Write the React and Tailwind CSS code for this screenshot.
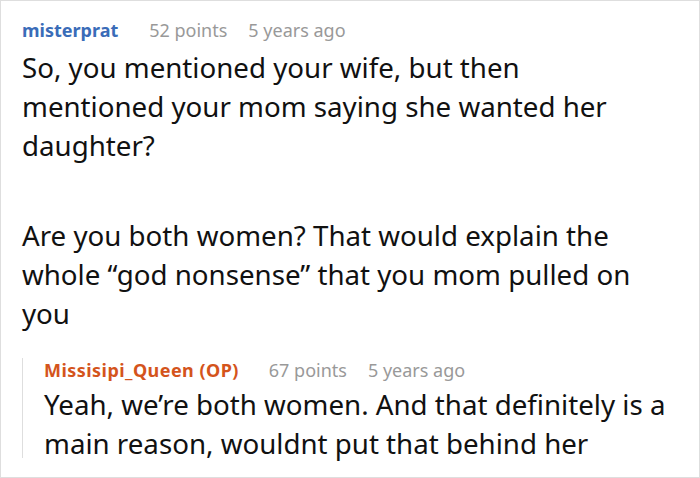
import React from 'react'

const font = { fontFamily: '"Noto Sans", "Open Sans", sans-serif' }

const Meta = ({ name, color, points, age, gapName, className = '' }) => (
    <div className={`flex items-baseline text-[18px] leading-[24px] ${className}`}>
        <span className={`font-bold ${color}`}>{name}</span>
        <span className={`text-[#999] ${gapName}`}>{points}</span>
        <span className="text-[#999] ml-[21px]">{age}</span>
    </div>
)

const App = () => {
    return (
        <div
            className="w-[700px] h-[478px] bg-white border border-[#dedede] overflow-hidden pl-[21px] pt-[17px] text-[#111]"
            style={font}
        >
            {/* Parent comment */}
            <Meta
                name="misterprat"
                color="text-[#3a6cb8]"
                points="52 points"
                age="5 years ago"
                gapName="ml-[31px]"
            />
            <div className="text-[27.7px] leading-[39px] mt-[6px] w-[630px]">
                <p className="mb-[51px]">
                    So, you mentioned your wife, but then mentioned your mom saying she wanted her daughter?
                </p>
                <p>
                    Are you both women? That would explain the whole “god nonsense” that you mom pulled on you
                </p>
            </div>

            {/* Reply */}
            <div className="mt-[35px] border-l border-[#dedede] pl-[21px] h-[100px]">
                <Meta
                    name="Missisipi_Queen (OP)"
                    color="text-[#d4541c] tracking-[0.45px]"
                    points="67 points"
                    age="5 years ago"
                    gapName="ml-[30px]"
                    className="-mt-[10px]"
                />
                <p className="text-[27.7px] leading-[39px] mt-[3px] w-[645px]">
                    Yeah, we’re both women. And that definitely is a main reason, wouldnt put that behind her
                </p>
            </div>
        </div>
    )
}

export default App
